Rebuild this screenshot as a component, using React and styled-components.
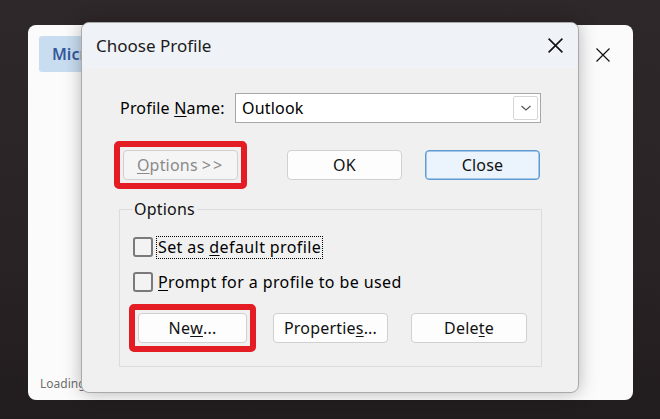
import React from "react";
import styled, { createGlobalStyle } from "styled-components";

const GlobalStyle = createGlobalStyle`
  html, body {
    margin: 0;
    padding: 0;
    background: #2b2426;
  }
  * {
    box-sizing: border-box;
  }
`;

const Desktop = styled.div`
  position: relative;
  width: 660px;
  height: 419px;
  overflow: hidden;
  background: linear-gradient(180deg, #2f282a 0%, #2a2325 60%, #211c1e 100%);
  font-family: "Noto Sans", "Open Sans", sans-serif;
  color: #000;
`;

const BackWindow = styled.div`
  position: absolute;
  left: 28px;
  top: 25px;
  width: 605px;
  height: 375px;
  border-radius: 8px;
  background: #fbfbfb;
  padding: 11px 0 0 11px;
`;

const AppTab = styled.div`
  width: 90px;
  height: 36px;
  border-radius: 3px;
  background: #c8ddf0;
  color: #34589c;
  font-size: 16px;
  font-weight: 600;
  line-height: 36px;
  padding-left: 13px;
  white-space: nowrap;
  overflow: hidden;
`;

const BackClose = styled.div`
  position: absolute;
  right: 22px;
  top: 21px;
  width: 16px;
  height: 16px;
`;

const Loading = styled.div`
  position: absolute;
  left: 12px;
  bottom: 8px;
  font-size: 12px;
  color: #6f6f6f;
`;

const Dialog = styled.div`
  position: absolute;
  left: 81px;
  top: 22px;
  width: 498px;
  height: 371px;
  border-radius: 8px;
  border: 1px solid #a9a9a9;
  background: #f0f0f0;
  box-shadow: 0 0 18px rgba(0, 0, 0, 0.28);
  overflow: hidden;
  display: flex;
  flex-direction: column;
`;

const TitleBar = styled.div`
  height: 45px;
  flex: none;
  background: #eff2f7;
  display: flex;
  align-items: center;
  justify-content: space-between;
  padding: 0 14px 0 14px;
`;

const Title = styled.div`
  font-size: 17px;
  color: #1b1b1b;
`;

const Body = styled.div`
  padding: 25px 0 0 37px;
  font-size: 16px;
  letter-spacing: 0.2px;
`;

const Row = styled.div`
  display: flex;
  align-items: center;
  margin-top: ${(p) => p.$top || 0}px;
  margin-left: ${(p) => p.$left || 0}px;
`;

const Label = styled.div`
  width: 116px;
  flex: none;
  padding-left: 1px;
`;

const U = styled.span`
  text-decoration: underline;
  text-underline-offset: 2px;
`;

const Arrows = styled.span`
  letter-spacing: 2px;
  margin-left: 4px;
`;

const Combo = styled.div`
  width: 306px;
  height: 30px;
  border: 1px solid #a7a7a7;
  background: #fff;
  display: flex;
  align-items: center;
  justify-content: space-between;
  padding: 0 2px 0 6px;
`;

const DropButton = styled.div`
  width: 25px;
  height: 24px;
  border: 1px solid #d6d6d6;
  border-radius: 2px;
  display: flex;
  align-items: center;
  justify-content: center;
`;

const Button = styled.div`
  width: ${(p) => p.$w || 115}px;
  height: 30px;
  flex: none;
  margin-left: ${(p) => p.$left || 0}px;
  border-radius: 4px;
  border: 1px solid ${(p) => (p.$default ? "#5e9bd4" : "#d0d0d0")};
  box-shadow: ${(p) => (p.$default ? "inset 0 0 0 0.5px #5e9bd4" : "none")};
  background: ${(p) => (p.$default ? "#ebf3fc" : p.$disabled ? "#f5f5f5" : "#fdfdfd")};
  color: ${(p) => (p.$disabled ? "#8a8a8a" : "#111")};
  display: flex;
  align-items: center;
  justify-content: center;
  font-size: 16px;
`;

const Highlight = styled.div`
  position: relative;
  flex: none;
  margin-left: ${(p) => p.$left || 0}px;
  &::after {
    content: "";
    position: absolute;
    inset: -9px -9px -9px -9px;
    border: 6px solid #e41c24;
    border-radius: 5px;
    pointer-events: none;
  }
`;

const Group = styled.fieldset`
  margin: 18px 0 0 0;
  width: 423px;
  border: 1px solid #dcdcdc;
  padding: 0 0 23px 13px;
  min-width: 0;
`;

const Legend = styled.legend`
  margin-left: 0;
  padding: 0 2px 0 1px;
  font-size: 16px;
  line-height: 22px;
  color: #111;
`;

const CheckRow = styled.div`
  display: flex;
  align-items: center;
  height: 22px;
  margin-top: ${(p) => p.$top || 0}px;
`;

const Box = styled.div`
  width: 20px;
  height: 20px;
  border: 2px solid #7a7a7a;
  border-radius: 3px;
  background: #f3f3f3;
  flex: none;
  margin-right: 4px;
`;

const CheckText = styled.span`
  padding: 0 1px;
  line-height: 21px;
  letter-spacing: 0.4px;
  outline: ${(p) => (p.$focus ? "1px dotted #000" : "none")};
  outline-offset: 0px;
`;

const ButtonRow = styled.div`
  display: flex;
  align-items: center;
  margin-top: 20px;
  padding-left: 5px;
`;

const Cross = ({ size = 16, stroke = 1.3 }) => (
  <svg width={size} height={size} viewBox="0 0 16 16">
    <path d="M1.5 1.5 L14.5 14.5 M14.5 1.5 L1.5 14.5" stroke="#111" strokeWidth={stroke} fill="none" />
  </svg>
);

export default function App() {
  return (
    <Desktop>
      <GlobalStyle />
      <BackWindow>
        <AppTab>Microsoft Outlook</AppTab>
        <BackClose>
          <Cross size={16} stroke={1.2} />
        </BackClose>
        <Loading>Loading...</Loading>
      </BackWindow>

      <Dialog>
        <TitleBar>
          <Title>Choose Profile</Title>
          <Cross size={17} stroke={1.5} />
        </TitleBar>
        <Body>
          <Row>
            <Label>
              Profile <U>N</U>ame:
            </Label>
            <Combo>
              <span>Outlook</span>
              <DropButton>
                <svg width="12" height="8" viewBox="0 0 12 8">
                  <path d="M1.5 2 L6 6 L10.5 2" stroke="#5a5a5a" strokeWidth="1.3" fill="none" />
                </svg>
              </DropButton>
            </Combo>
          </Row>

          <Row $top={27} $left={4}>
            <Highlight>
              <Button $disabled>
                <U>O</U>ptions<Arrows>&gt;&gt;</Arrows>
              </Button>
            </Highlight>
            <Button $left={49}>OK</Button>
            <Button $left={23} $default>
              Close
            </Button>
          </Row>

          <Group>
            <Legend>Options</Legend>
            <CheckRow $top={16}>
              <Box />
              <CheckText $focus>
                Set as <U>d</U>efault profile
              </CheckText>
            </CheckRow>
            <CheckRow $top={13}>
              <Box />
              <CheckText>
                <U>P</U>rompt for a profile to be used
              </CheckText>
            </CheckRow>
            <ButtonRow>
              <Highlight>
                <Button $w={109}>
                  Ne<U>w</U>...
                </Button>
              </Highlight>
              <Button $left={26}>
                Propertie<U>s</U>...
              </Button>
              <Button $left={23} $w={116}>
                Dele<U>t</U>e
              </Button>
            </ButtonRow>
          </Group>
        </Body>
      </Dialog>
    </Desktop>
  );
}
